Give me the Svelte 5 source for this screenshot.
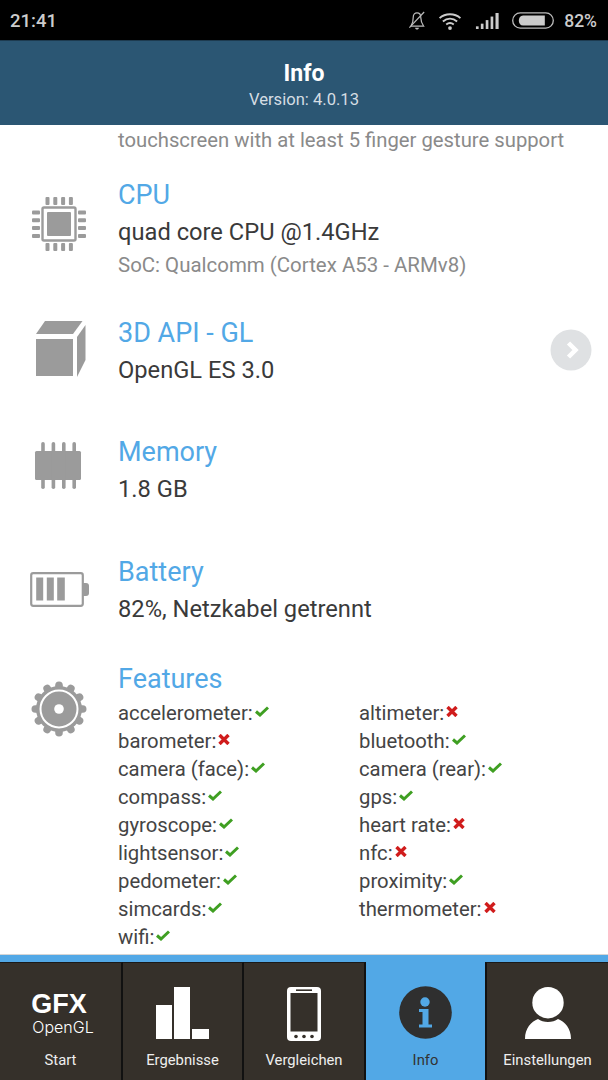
<script lang="ts">
  const left = [
    ["accelerometer", true],
    ["barometer", false],
    ["camera (face)", true],
    ["compass", true],
    ["gyroscope", true],
    ["lightsensor", true],
    ["pedometer", true],
    ["simcards", true],
    ["wifi", true],
  ];
  const right = [
    ["altimeter", false],
    ["bluetooth", true],
    ["camera (rear)", true],
    ["gps", true],
    ["heart rate", false],
    ["nfc", false],
    ["proximity", true],
    ["thermometer", false],
  ];
  const chipPins = [0, 1, 2, 3];
  const gearTeeth = [0, 30, 60, 90, 120, 150, 180, 210, 240, 270, 300, 330];
</script>

{#snippet feature(name, ok)}
  <div class="feature">
    <span>{name}:</span>
    {#if ok}
      <svg class="mark" width="14" height="11" viewBox="0 0 14 11"><path d="M1 5.5 L5 9 L13 1.5" fill="none" stroke="#3f9f22" stroke-width="3" /></svg>
    {:else}
      <svg class="mark" width="12" height="11" viewBox="0 0 12 11"><path d="M1.5 1 L10.5 10 M10.5 1 L1.5 10" fill="none" stroke="#d01c1c" stroke-width="3.4" /></svg>
    {/if}
  </div>
{/snippet}

<div class="screen">
  <div class="statusbar">
    <span class="time">21:41</span>
    <div class="status-icons">
      <svg width="18" height="20" viewBox="0 0 18 21" class="st-bell">
        <path d="M3 15 C5 12 5 10 5 7 C5 3.5 7 2 9 2 C11 2 13 3.5 13 7 C13 10 14 13 16 16 H2" fill="none" stroke="#bbb" stroke-width="1.3" />
        <path d="M1 17.5 L16.5 1" stroke="#bbb" stroke-width="1.3" />
        <path d="M7 17.5 H11 C11 20 7 20 7 17.5 Z" fill="#bbb" />
      </svg>
      <svg width="24" height="18" viewBox="0 0 24 19" class="st-wifi">
        <path d="M1 6.5 C7 1 17 1 23 6.5 M4.5 10 C9 6 15 6 19.5 10 M8 13.2 C10.5 11.2 13.5 11.2 16 13.2" fill="none" stroke="#ccc" stroke-width="2" />
        <circle cx="12" cy="17" r="2" fill="#ccc" />
      </svg>
      <svg width="25" height="16" viewBox="0 0 26 18" class="st-signal">
        <rect x="0" y="15" width="3" height="3" fill="#ccc" />
        <rect x="5.5" y="12" width="3" height="6" fill="#ccc" />
        <rect x="11" y="8" width="3" height="10" fill="#ccc" />
        <rect x="16.5" y="4" width="3" height="14" fill="#ccc" />
        <rect x="22" y="0" width="3.5" height="18" fill="#ccc" />
      </svg>
      <svg width="44" height="17" viewBox="0 0 45 18" class="st-batt">
        <rect x="1" y="1" width="43" height="16" rx="8" fill="none" stroke="#bbb" stroke-width="1.4" />
        <path d="M12 3.6 H35 V14.4 H12 C6 14.4 6 3.6 12 3.6 Z" fill="#ccc" />
      </svg>
      <span class="pct">82%</span>
    </div>
  </div>

  <header class="titlebar">
    <div class="title">Info</div>
    <div class="version">Version: 4.0.13</div>
  </header>

  <main class="content">
    <div class="clipped">touchscreen with at least 5 finger gesture support</div>

    <section class="row row-cpu">
      <div class="icon">
        <svg width="56" height="56" viewBox="0 0 56 56">
          <rect x="11.5" y="11.5" width="33" height="33" rx="1.5" fill="none" stroke="#9b9b9b" stroke-width="2.4" />
          <rect x="16" y="16" width="24" height="24" rx="1" fill="#9b9b9b" />
          {#each chipPins as i}
            <rect x={14.5 + i * 7.8} y="1" width="4" height="8" rx="1" fill="#9b9b9b" />
            <rect x={14.5 + i * 7.8} y="47" width="4" height="8" rx="1" fill="#9b9b9b" />
            <rect x="1" y={14.5 + i * 7.8} width="8" height="4" rx="1" fill="#9b9b9b" />
            <rect x="47" y={14.5 + i * 7.8} width="8" height="4" rx="1" fill="#9b9b9b" />
          {/each}
        </svg>
      </div>
      <div class="body">
        <h2>CPU</h2>
        <p>quad core CPU @1.4GHz</p>
        <p class="sub">SoC: Qualcomm (Cortex A53 - ARMv8)</p>
      </div>
    </section>

    <section class="row row-api">
      <div class="icon">
        <svg width="52" height="58" viewBox="0 0 52 58">
          <path d="M1 14 L10 1 H47.5 L38 14 Z" fill="#9b9b9b" />
          <rect x="1" y="19" width="37" height="37" fill="#9b9b9b" />
          <path d="M42 57 V17 L50.5 5 V40 Z" fill="#9b9b9b" />
        </svg>
      </div>
      <div class="body">
        <h2>3D API - GL</h2>
        <p>OpenGL ES 3.0</p>
      </div>
      <div class="chevron">
        <svg width="42" height="42" viewBox="0 0 42 42">
          <circle cx="21" cy="21" r="20.5" fill="#dfe1e3" />
          <path d="M18.5 14 L25.5 21 L18.5 28" fill="none" stroke="#fff" stroke-width="4.5" />
        </svg>
      </div>
    </section>

    <section class="row row-mem">
      <div class="icon">
        <svg width="48" height="49" viewBox="0 0 48 49">
          <rect x="1" y="10" width="46" height="29" rx="1.5" fill="#9b9b9b" />
          {#each chipPins as i}
            <rect x={7.2 + i * 10.4} y="1" width="3.6" height="47" rx="1.8" fill="#9b9b9b" />
          {/each}
        </svg>
      </div>
      <div class="body">
        <h2>Memory</h2>
        <p>1.8 GB</p>
      </div>
    </section>

    <section class="row row-batt">
      <div class="icon">
        <svg width="60" height="36" viewBox="0 0 60 36">
          <rect x="1.2" y="1.2" width="51.6" height="32.6" rx="2" fill="none" stroke="#9b9b9b" stroke-width="2.2" />
          <rect x="6.2" y="5.5" width="7" height="23" fill="#9b9b9b" />
          <rect x="16.8" y="5.5" width="7" height="23" fill="#9b9b9b" />
          <rect x="27.2" y="5.5" width="7.6" height="23" fill="#9b9b9b" />
          <path d="M53 11 H56 Q59 11 59 14 V21 Q59 24 56 24 H53 Z" fill="#9b9b9b" />
        </svg>
      </div>
      <div class="body">
        <h2>Battery</h2>
        <p>82%, Netzkabel getrennt</p>
      </div>
    </section>

    <section class="row row-feat">
      <div class="icon">
        <svg width="56" height="56" viewBox="0 0 56 56">
          {#each gearTeeth as a}
            <rect x="24.2" y="0.5" width="7.6" height="12" rx="3.8" fill="#9b9b9b" transform="rotate({a} 28 28)" />
          {/each}
          <circle cx="28" cy="28" r="23" fill="#9b9b9b" />
          <circle cx="28" cy="28" r="18.5" fill="none" stroke="#fff" stroke-width="2" />
          <circle cx="28" cy="28" r="4.8" fill="#fff" />
        </svg>
      </div>
      <div class="body">
        <h2>Features</h2>
        <div class="features">
          <div class="col">
            {#each left as [name, ok]}
              {@render feature(name, ok)}
            {/each}
          </div>
          <div class="col">
            {#each right as [name, ok]}
              {@render feature(name, ok)}
            {/each}
          </div>
        </div>
      </div>
    </section>
  </main>

  <nav class="tabs">
    <div class="tab tab-start">
      <div class="tab-icon gfx">
        <span class="gfx-big">GFX</span>
        <span class="gfx-small">OpenGL</span>
      </div>
      <span class="tab-label">Start</span>
    </div>
    <div class="tab tab-res">
      <div class="tab-icon">
        <svg width="54" height="52" viewBox="0 0 54 52">
          <rect x="0" y="18" width="16" height="34" fill="#fff" />
          <rect x="18" y="0" width="16" height="52" fill="#fff" />
          <rect x="36" y="42" width="17" height="10" fill="#fff" />
        </svg>
      </div>
      <span class="tab-label">Ergebnisse</span>
    </div>
    <div class="tab tab-cmp">
      <div class="tab-icon">
        <svg width="34" height="54" viewBox="0 0 34 54">
          <rect x="0" y="0" width="34" height="54" rx="4" fill="#fff" />
          <rect x="3.5" y="6" width="27" height="38.5" fill="#35302a" />
          <rect x="9" y="2.4" width="16" height="1.6" fill="#35302a" />
          <circle cx="9" cy="49.5" r="1.8" fill="#35302a" />
          <circle cx="17" cy="49.5" r="1.8" fill="#35302a" />
          <circle cx="25" cy="49.5" r="1.8" fill="#35302a" />
        </svg>
      </div>
      <span class="tab-label">Vergleichen</span>
    </div>
    <div class="tab tab-info">
      <div class="tab-icon">
        <svg width="53" height="53" viewBox="0 0 53 53">
          <circle cx="26.5" cy="26.5" r="26.3" fill="#2f2f2f" />
          <circle cx="26" cy="16" r="4.7" fill="#52a8e6" />
          <path d="M20 23 H29.5 V38.5 H33 V41.5 H20 V38.5 H23.5 V26 H20 Z" fill="#52a8e6" />
        </svg>
      </div>
      <span class="tab-label">Info</span>
    </div>
    <div class="tab tab-set">
      <div class="tab-icon">
        <svg width="46" height="52" viewBox="0 0 46 52">
          <circle cx="23" cy="15.7" r="15.7" fill="#fff" />
          <path d="M0 52 C0 41 6 35 13 32 C18 36 28 36 33 32 C40 35 46 41 46 52 Z" fill="#fff" />
        </svg>
      </div>
      <span class="tab-label">Einstellungen</span>
    </div>
  </nav>
</div>

<style>
  :global(body) {
    margin: 0;
    background: #fff;
  }
  .screen {
    width: 608px;
    height: 1080px;
    display: flex;
    flex-direction: column;
    overflow: hidden;
    font-family: Roboto, "Noto Sans", sans-serif;
  }

  /* status bar */
  .statusbar {
    height: 40px;
    flex: none;
    background: #000;
    color: #ccc;
    display: flex;
    align-items: center;
    justify-content: space-between;
    padding: 1px 11px 0 10px;
    box-sizing: border-box;
    font-size: 18.5px;
    font-weight: 500;
  }
  .status-icons {
    display: flex;
    align-items: center;
  }
  .st-bell {
    margin-right: 12px;
  }
  .st-wifi {
    margin-right: 13px;
  }
  .st-signal {
    margin-right: 11px;
  }
  .st-batt {
    margin-right: 9px;
  }
  .pct {
    font-size: 17.5px;
  }

  .titlebar {
    height: 85px;
    flex: none;
    background: #2b5673;
    border-top: 1px solid #1d3b50;
    box-sizing: border-box;
    text-align: center;
    color: #fff;
  }
  .title {
    font-size: 23px;
    font-weight: 700;
    margin-top: 19px;
    line-height: 28px;
  }
  .version {
    font-size: 16.6px;
    color: #d5dde3;
    line-height: 20px;
    margin-top: 2px;
  }

  .content {
    flex: 1;
    min-height: 0;
    overflow: hidden;
    background: #fff;
  }
  .clipped {
    margin: 2px 0 0 118px;
    font-size: 20.25px;
    line-height: 26px;
    color: #8a8a8a;
    white-space: nowrap;
  }
  .row {
    display: flex;
    position: relative;
  }
  .icon {
    width: 118px;
    flex: none;
    display: flex;
    align-items: flex-start;
    box-sizing: border-box;
  }
  .icon svg {
    flex: none;
  }
  .body {
    flex: 1;
  }
  h2 {
    margin: 0;
    font-size: 27px;
    font-weight: 400;
    line-height: 34px;
    color: #52a8e6;
  }
  p {
    margin: 1px 0 0;
    font-size: 23.7px;
    line-height: 38px;
    color: #3a3a3a;
  }
  p.sub {
    margin-top: 0;
    font-size: 20.45px;
    line-height: 28px;
    color: #8a8a8a;
  }
  .row-cpu {
    margin-top: 25px;
  }
  .row-cpu .icon {
    padding: 18px 0 0 31px;
  }
  .row-api {
    margin-top: 37px;
  }
  .row-api .icon {
    padding: 4px 0 0 35px;
  }
  .row-mem {
    margin-top: 46px;
  }
  .row-mem .icon {
    padding: 6px 0 0 34px;
  }
  .row-batt {
    margin-top: 47px;
  }
  .row-batt .icon {
    padding: 17px 0 0 30px;
  }
  .row-feat {
    margin-top: 34px;
  }
  .row-feat .icon {
    padding: 19px 0 0 31px;
  }
  .chevron {
    position: absolute;
    left: 550px;
    top: 13px;
  }
  .features {
    display: flex;
    margin-top: 3px;
  }
  .col {
    width: 241px;
  }
  .feature {
    display: flex;
    align-items: center;
    height: 28px;
    font-size: 20.3px;
    color: #444;
  }
  .mark {
    margin: -3px 0 0 2px;
  }

  /* bottom tabs */
  .tabs {
    height: 126px;
    flex: none;
    box-sizing: border-box;
    background: #52a8e6;
    border-top: 1px solid #d5d5d5;
    padding-top: 7px;
    display: flex;
  }
  .tab {
    background: #35302a;
    color: #eee;
    display: flex;
    flex-direction: column;
    align-items: center;
    position: relative;
    box-sizing: border-box;
    border-top: 1px solid #1a1a1a;
  }
  .tab-start {
    width: 123px;
    border-right: 2px solid #111;
  }
  .tab-res {
    width: 121px;
    border-right: 2px solid #111;
  }
  .tab-cmp {
    width: 122px;
    border-right: 2px solid #111;
  }
  .tab-info {
    width: 119px;
    background: #52a8e6;
    color: #333;
    border-top: none;
  }
  .tab-set {
    width: 123px;
    border-left: 2px solid #111;
  }
  .tab-icon {
    height: 84px;
    padding-top: 24px;
    box-sizing: border-box;
    display: flex;
    flex-direction: column;
    align-items: center;
  }
  .tab-icon svg {
    flex: none;
  }
  .gfx {
    padding-top: 28px;
    color: #fff;
    line-height: 1;
  }
  .tab-label {
    font-size: 14.8px;
    position: absolute;
    top: 87px;
    line-height: 20px;
    white-space: nowrap;
  }
  .tab-info .tab-label {
    top: 88px;
  }
  .gfx-big {
    font-family: "Liberation Sans", Roboto, sans-serif;
    font-size: 27px;
    font-weight: 700;
    line-height: 26px;
    margin-left: -3px;
  }
  .gfx-small {
    font-family: Inter, Roboto, sans-serif;
    font-size: 16px;
    font-weight: 300;
    line-height: 20px;
    margin-left: 5px;
  }
</style>
